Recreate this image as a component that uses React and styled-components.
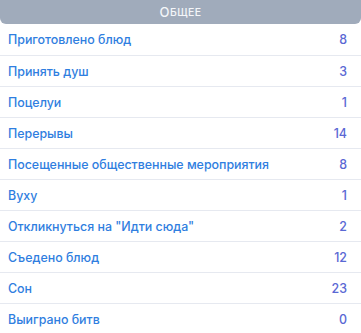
import styled, { createGlobalStyle } from "styled-components";

const GlobalStyle = createGlobalStyle`
  html, body {
    margin: 0;
    padding: 0;
    background: #ffffff;
  }
  body {
    font-family: "Inter", "Noto Sans", sans-serif;
  }
`;

const Panel = styled.div`
  width: 361px;
  display: flex;
  flex-direction: column;
`;

const Header = styled.div`
  height: 24px;
  background: #a0abbb;
  border-radius: 0 0 6px 6px;
  display: flex;
  align-items: center;
  justify-content: center;
  color: #f4f6f9;
  font-size: 13px;
  font-weight: 500;
  text-transform: uppercase;
  letter-spacing: 0.4px;
`;

const SmallCaps = styled.span`
  font-size: 10.5px;
`;

const Row = styled.div`
  height: 31px;
  box-sizing: border-box;
  display: flex;
  align-items: center;
  justify-content: space-between;
  padding: 0 14px 0 8px;
  border-top: ${(p) => (p.first ? "none" : "1px solid #e6e9f0")};
  font-size: 12.4px;
  font-weight: 500;
`;

const Label = styled.span`
  color: #2f7ee0;
`;

const Value = styled.span`
  color: #5a68d4;
`;

const stats = [
  ["Приготовлено блюд", 8],
  ["Принять душ", 3],
  ["Поцелуи", 1],
  ["Перерывы", 14],
  ["Посещенные общественные мероприятия", 8],
  ["Вуху", 1],
  ['Откликнуться на "Идти сюда"', 2],
  ["Съедено блюд", 12],
  ["Сон", 23],
  ["Выиграно битв", 0],
];

export default function App() {
  return (
    <>
      <GlobalStyle />
      <Panel>
        <Header>
          О<SmallCaps>бщее</SmallCaps>
        </Header>
        {stats.map(([name, n], i) => (
          <Row key={name} first={i === 0}>
            <Label>{name}</Label>
            <Value>{n}</Value>
          </Row>
        ))}
      </Panel>
    </>
  );
}
